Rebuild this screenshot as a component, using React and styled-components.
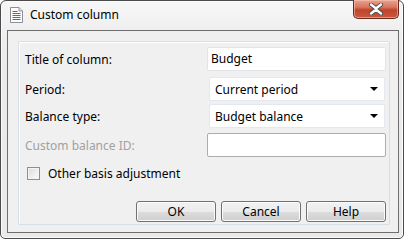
import React from "react";
import styled, { createGlobalStyle } from "styled-components";

const Global = createGlobalStyle`
  html, body { margin: 0; padding: 0; background: #ffffff; }
  body { font-family: "Noto Sans", "Liberation Sans", sans-serif; }
`;

const Window = styled.div`
  box-sizing: border-box;
  width: 404px;
  height: 239px;
  border: 1px solid #4b4b4b;
  border-radius: 6px 6px 5px 5px;
  background: linear-gradient(#f7f7f7, #ececec 40px, #e9e9e9);
  box-shadow: inset 0 0 0 1px #fbfbfb;
  display: flex;
  flex-direction: column;
  padding: 0 4px 5px 6px;
`;

const TitleBar = styled.div`
  height: 29px;
  display: flex;
  align-items: flex-start;
  position: relative;
`;

const TitleIcon = styled.svg`
  margin: 6px 0 0 3px;
  flex: none;
`;

const TitleText = styled.span`
  margin: 5px 0 0 7px;
  font-size: 12px;
  line-height: 18px;
  color: #000;
`;

const CloseButton = styled.div`
  position: absolute;
  right: 0;
  top: -1px;
  width: 46px;
  height: 19px;
  box-sizing: border-box;
  border: 1px solid #6b2a1f;
  border-top: none;
  border-radius: 0 0 5px 5px;
  background: linear-gradient(#e5a394, #d7765f 40%, #c1432a 55%, #c75a3e);
  box-shadow: inset 0 0 0 1px rgba(255, 200, 180, 0.55);
  display: flex;
  align-items: center;
  justify-content: center;
`;

const Client = styled.div`
  flex: 1;
  border: 1px solid #6e6e6e;
  background: #f0f0f0;
  padding: 10px 8px 7px 10px;
  display: flex;
`;

const Group = styled.div`
  flex: 1;
  border: 1px solid #d5dfe5;
  box-shadow: inset 1px 1px 0 #ffffff;
  border-radius: 2px;
  padding: 5px 3px 0 6px;
  display: flex;
  flex-direction: column;
`;

const Row = styled.div`
  display: flex;
  align-items: center;
  justify-content: space-between;
  margin-top: ${(p) => p.$top || 0}px;
  height: ${(p) => p.$h || 24}px;
`;

const Label = styled.span`
  font-size: 12px;
  color: ${(p) => (p.$disabled ? "#a0a0a0" : "#000")};
`;

const TextBox = styled.div`
  box-sizing: border-box;
  width: 179px;
  height: 24px;
  background: #fff;
  border: 1px solid ${(p) => (p.$dark ? "#adadad" : "#e1e4e8")};
  border-radius: 2px;
  font-size: 12px;
  padding: 2px 3px;
  line-height: 18px;
  color: #000;
`;

const Select = styled.div`
  box-sizing: border-box;
  width: 176px;
  height: 24px;
  margin-right: 1px;
  background: #fff;
  border: 1px solid #e3e8ee;
  border-radius: 2px;
  font-size: 12px;
  padding: 0 6px 0 5px;
  display: flex;
  align-items: center;
  justify-content: space-between;
  color: #000;
`;

const Arrow = styled.span`
  width: 0;
  height: 0;
  border-left: 4px solid transparent;
  border-right: 4px solid transparent;
  border-top: 4px solid #000;
`;

const CheckRow = styled.label`
  display: flex;
  align-items: center;
  gap: 8px;
  margin-top: 8px;
  padding-left: 2px;
  height: 16px;
  font-size: 12px;
  color: #000;
`;

const Check = styled.span`
  box-sizing: border-box;
  width: 13px;
  height: 13px;
  border: 1px solid #8e8f8f;
  background: linear-gradient(135deg, #dcdcdc, #fdfdfd);
  box-shadow: inset 0 0 0 1px #f4f4f4;
`;

const Buttons = styled.div`
  display: flex;
  justify-content: flex-end;
  gap: 5px;
  margin-top: 20px;
`;

const Button = styled.div`
  box-sizing: border-box;
  width: 80px;
  height: 21px;
  border: 1px solid #707070;
  border-radius: 3px;
  background: linear-gradient(#f2f2f2, #ebebeb 50%, #dddddd 51%, #cfcfcf);
  box-shadow: inset 0 0 0 1px #fbfbfb;
  font-size: 12px;
  display: flex;
  align-items: center;
  justify-content: center;
  color: #000;
`;

export default function App() {
  return (
    <>
      <Global />
      <Window>
        <TitleBar>
          <TitleIcon width="13" height="16" viewBox="0 0 13 16">
            <path d="M0.5 0.5H9L12.5 4V15.5H0.5Z" fill="#fdfdfd" stroke="#8a8f98" />
            <path d="M9 0.5V4H12.5" fill="#e6e9ee" stroke="#8a8f98" />
            <g stroke="#3f6fb8" strokeWidth="1">
              <path d="M2.5 4.5H7.5" />
              <path d="M2.5 6.5H10.5" />
              <path d="M2.5 8.5H10.5" />
              <path d="M2.5 10.5H10.5" />
              <path d="M2.5 12.5H10.5" />
            </g>
          </TitleIcon>
          <TitleText>Custom column</TitleText>
          <CloseButton>
            <svg width="14" height="12" viewBox="0 0 14 12">
              <path
                d="M2 1.5L7 5.5L12 1.5M2 10.5L7 6.5L12 10.5"
                stroke="#4a4a4a"
                strokeWidth="4.2"
                fill="none"
                strokeLinecap="round"
              />
              <path
                d="M2 1.5L7 5.5L12 1.5M2 10.5L7 6.5L12 10.5"
                stroke="#ffffff"
                strokeWidth="2.4"
                fill="none"
                strokeLinecap="round"
              />
            </svg>
          </CloseButton>
        </TitleBar>
        <Client>
          <Group>
            <Row>
              <Label>Title of column:</Label>
              <TextBox>Budget</TextBox>
            </Row>
            <Row $top={6} $h={24}>
              <Label>Period:</Label>
              <Select>
                Current period
                <Arrow />
              </Select>
            </Row>
            <Row $top={3} $h={24}>
              <Label>Balance type:</Label>
              <Select>
                Budget balance
                <Arrow />
              </Select>
            </Row>
            <Row $top={5}>
              <Label $disabled>Custom balance ID:</Label>
              <TextBox $dark />
            </Row>
            <CheckRow>
              <Check />
              Other basis adjustment
            </CheckRow>
            <Buttons>
              <Button>OK</Button>
              <Button>Cancel</Button>
              <Button>Help</Button>
            </Buttons>
          </Group>
        </Client>
      </Window>
    </>
  );
}
